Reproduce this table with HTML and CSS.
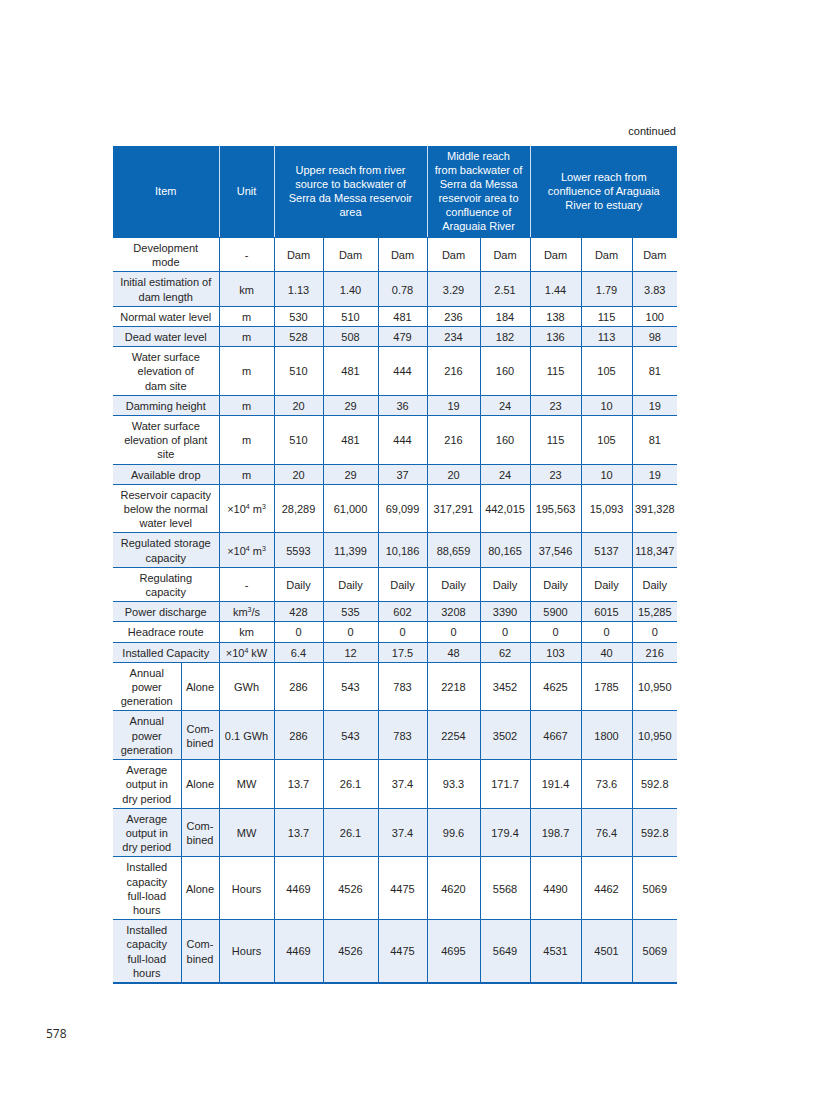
FILE: index.html
```html
<!DOCTYPE html>
<html>
<head>
<meta charset="utf-8">
<link rel="stylesheet" href="styles.css">
</head>
<body>
<div class="page">
  <div class="sheet">
    <div class="continued">continued</div>
    <table class="data">
      <colgroup>
        <col class="c-ia"><col class="c-ib"><col class="c-unit">
        <col class="c-d1"><col class="c-d2"><col class="c-d3">
        <col class="c-d4"><col class="c-d5">
        <col class="c-d6"><col class="c-d7"><col class="c-d8">
      </colgroup>
      <thead>
        <tr>
          <th colspan="2">Item</th>
          <th>Unit</th>
          <th colspan="3">Upper reach from river<br>source to backwater of<br>Serra da Messa reservoir<br>area</th>
          <th colspan="2">Middle reach<br>from backwater of<br>Serra da Messa<br>reservoir area to<br>confluence of<br>Araguaia River</th>
          <th colspan="3">Lower reach from<br>confluence of Araguaia<br>River to estuary</th>
        </tr>
      </thead>
      <tbody>
        <tr><td colspan="2">Development<br>mode</td><td>-</td><td>Dam</td><td>Dam</td><td>Dam</td><td>Dam</td><td>Dam</td><td>Dam</td><td>Dam</td><td>Dam</td></tr>
        <tr><td colspan="2">Initial estimation of<br>dam length</td><td>km</td><td>1.13</td><td>1.40</td><td>0.78</td><td>3.29</td><td>2.51</td><td>1.44</td><td>1.79</td><td>3.83</td></tr>
        <tr><td colspan="2">Normal water level</td><td>m</td><td>530</td><td>510</td><td>481</td><td>236</td><td>184</td><td>138</td><td>115</td><td>100</td></tr>
        <tr><td colspan="2">Dead water level</td><td>m</td><td>528</td><td>508</td><td>479</td><td>234</td><td>182</td><td>136</td><td>113</td><td>98</td></tr>
        <tr><td colspan="2">Water surface<br>elevation of<br>dam site</td><td>m</td><td>510</td><td>481</td><td>444</td><td>216</td><td>160</td><td>115</td><td>105</td><td>81</td></tr>
        <tr><td colspan="2">Damming height</td><td>m</td><td>20</td><td>29</td><td>36</td><td>19</td><td>24</td><td>23</td><td>10</td><td>19</td></tr>
        <tr><td colspan="2">Water surface<br>elevation of plant<br>site</td><td>m</td><td>510</td><td>481</td><td>444</td><td>216</td><td>160</td><td>115</td><td>105</td><td>81</td></tr>
        <tr><td colspan="2">Available drop</td><td>m</td><td>20</td><td>29</td><td>37</td><td>20</td><td>24</td><td>23</td><td>10</td><td>19</td></tr>
        <tr><td colspan="2">Reservoir capacity<br>below the normal<br>water level</td><td>×10<sup>4</sup> m<sup>3</sup></td><td>28,289</td><td>61,000</td><td>69,099</td><td>317,291</td><td>442,015</td><td>195,563</td><td>15,093</td><td>391,328</td></tr>
        <tr><td colspan="2">Regulated storage<br>capacity</td><td>×10<sup>4</sup> m<sup>3</sup></td><td>5593</td><td>11,399</td><td>10,186</td><td>88,659</td><td>80,165</td><td>37,546</td><td>5137</td><td>118,347</td></tr>
        <tr><td colspan="2">Regulating<br>capacity</td><td>-</td><td>Daily</td><td>Daily</td><td>Daily</td><td>Daily</td><td>Daily</td><td>Daily</td><td>Daily</td><td>Daily</td></tr>
        <tr><td colspan="2">Power discharge</td><td>km<sup>3</sup>/s</td><td>428</td><td>535</td><td>602</td><td>3208</td><td>3390</td><td>5900</td><td>6015</td><td>15,285</td></tr>
        <tr><td colspan="2">Headrace route</td><td>km</td><td>0</td><td>0</td><td>0</td><td>0</td><td>0</td><td>0</td><td>0</td><td>0</td></tr>
        <tr><td colspan="2">Installed Capacity</td><td>×10<sup>4</sup> kW</td><td>6.4</td><td>12</td><td>17.5</td><td>48</td><td>62</td><td>103</td><td>40</td><td>216</td></tr>
        <tr><td>Annual<br>power<br>generation</td><td>Alone</td><td>GWh</td><td>286</td><td>543</td><td>783</td><td>2218</td><td>3452</td><td>4625</td><td>1785</td><td>10,950</td></tr>
        <tr><td>Annual<br>power<br>generation</td><td>Com-<br>bined</td><td>0.1 GWh</td><td>286</td><td>543</td><td>783</td><td>2254</td><td>3502</td><td>4667</td><td>1800</td><td>10,950</td></tr>
        <tr><td>Average<br>output in<br>dry period</td><td>Alone</td><td>MW</td><td>13.7</td><td>26.1</td><td>37.4</td><td>93.3</td><td>171.7</td><td>191.4</td><td>73.6</td><td>592.8</td></tr>
        <tr><td>Average<br>output in<br>dry period</td><td>Com-<br>bined</td><td>MW</td><td>13.7</td><td>26.1</td><td>37.4</td><td>99.6</td><td>179.4</td><td>198.7</td><td>76.4</td><td>592.8</td></tr>
        <tr><td>Installed<br>capacity<br>full-load<br>hours</td><td>Alone</td><td>Hours</td><td>4469</td><td>4526</td><td>4475</td><td>4620</td><td>5568</td><td>4490</td><td>4462</td><td>5069</td></tr>
        <tr><td>Installed<br>capacity<br>full-load<br>hours</td><td>Com-<br>bined</td><td>Hours</td><td>4469</td><td>4526</td><td>4475</td><td>4695</td><td>5649</td><td>4531</td><td>4501</td><td>5069</td></tr>
      </tbody>
    </table>
  </div>
  <div class="folio">578</div>
</div>
</body>
</html>
```

FILE: styles.css
```css
html, body {
  margin: 0;
  padding: 0;
  background: #ffffff;
}

.page {
  width: 816px;
  height: 1100px;
  box-sizing: border-box;
  padding-top: 124px;
  position: relative;
  font-family: "Liberation Sans", Arial, sans-serif;
}

.sheet {
  width: 564px;
  margin-left: 113px;
}

.continued {
  text-align: right;
  font-size: 11px;
  line-height: 14px;
  color: #222222;
  margin-bottom: 8px;
  padding-right: 1px;
}

.data {
  width: 564px;
  border-collapse: collapse;
  table-layout: fixed;
  font-size: 11px;
  line-height: 14.2px;
  color: #262626;
}

.c-ia { width: 68px; }
.c-ib { width: 38px; }
.c-unit { width: 55px; }
.c-d1 { width: 49px; }
.c-d2 { width: 55px; }
.c-d3 { width: 49px; }
.c-d4 { width: 53px; }
.c-d5 { width: 50px; }
.c-d6 { width: 51px; }
.c-d7 { width: 51px; }
.c-d8 { width: 45px; }

.data th {
  background: #0b66b4;
  color: #ffffff;
  font-weight: normal;
  line-height: 14px;
  text-align: center;
  vertical-align: middle;
  padding: 3px 0 4px;
  border-left: 1px solid #cfe0f2;
  border-bottom: 1px solid #0b66b4;
}

.data th:first-child {
  border-left: none;
}

.data td {
  text-align: center;
  vertical-align: middle;
  padding: 3px 0 2px;
  border-left: 1px solid #1267b5;
  border-bottom: 1px solid #1267b5;
  white-space: nowrap;
}

.data td:first-child {
  border-left: none;
}

.data tbody tr:nth-child(even) td {
  background: #e8eef8;
}

.data tbody tr:last-child td {
  border-bottom: 2px solid #0f63b0;
}

.data sup {
  font-size: 7px;
  line-height: 0;
  vertical-align: 4px;
}

.folio {
  position: absolute;
  left: 46px;
  top: 1026px;
  font-family: "Open Sans", "DejaVu Sans", sans-serif;
  font-size: 12px;
  line-height: 16px;
  color: #2a2a2a;
}
```
